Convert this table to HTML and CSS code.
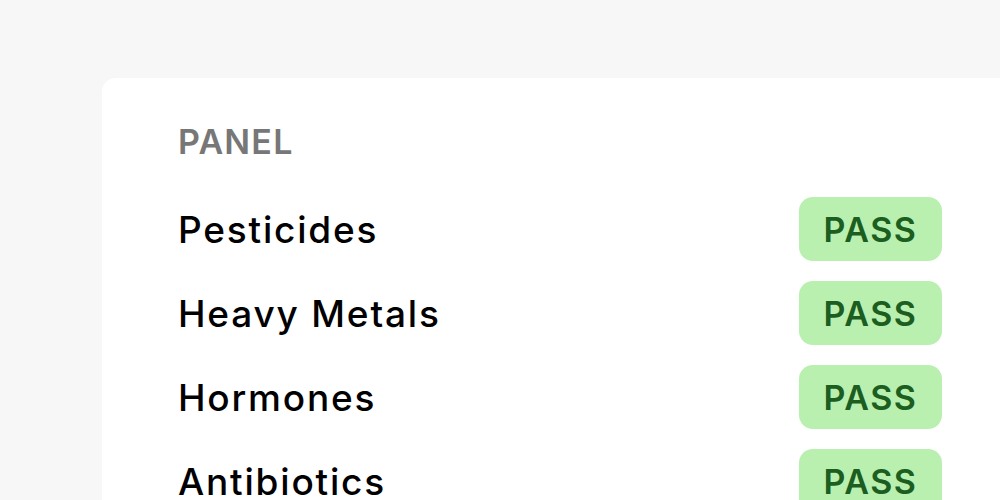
FILE: index.html
```html
<!DOCTYPE html>
<html>
<head>
<meta charset="utf-8">
<link rel="stylesheet" href="styles.css">
</head>
<body>
<div class="page">
  <section class="card">
    <h2 class="title">PANEL</h2>
    <ul class="list">
      <li class="row"><span class="label">Pesticides</span><span class="badge">PASS</span></li>
      <li class="row"><span class="label">Heavy Metals</span><span class="badge">PASS</span></li>
      <li class="row"><span class="label">Hormones</span><span class="badge">PASS</span></li>
      <li class="row"><span class="label">Antibiotics</span><span class="badge">PASS</span></li>
    </ul>
  </section>
</div>
</body>
</html>
```
FILE: styles.css
```css
html, body {
  margin: 0;
  padding: 0;
  background: #f7f7f7;
  overflow: hidden;
  height: 500px;
}
body {
  font-family: Inter, "Noto Sans", sans-serif;
}
.page {
  padding: 78px 0 0 102px;
}
.card {
  width: 916px;
  box-sizing: border-box;
  background: #ffffff;
  border-radius: 14px;
  padding: 42px 76px 40px 76px;
}
.title {
  margin: 0;
  font-size: 34px;
  line-height: 44px;
  font-weight: 600;
  color: #777777;
  letter-spacing: 1.2px;
}
.list {
  list-style: none;
  margin: 33px 0 0 0;
  padding: 0;
  display: flex;
  flex-direction: column;
  gap: 20px;
}
.row {
  display: flex;
  align-items: center;
  justify-content: space-between;
  height: 64px;
}
.label {
  font-size: 37px;
  font-weight: 500;
  color: #000000;
  letter-spacing: 1.8px;
}
.badge {
  width: 143px;
  height: 64px;
  box-sizing: border-box;
  display: flex;
  align-items: center;
  justify-content: center;
  background: #b9f0b0;
  color: #1b5e1f;
  border-radius: 14px;
  font-size: 34px;
  font-weight: 600;
  letter-spacing: 1.5px;
}
```
